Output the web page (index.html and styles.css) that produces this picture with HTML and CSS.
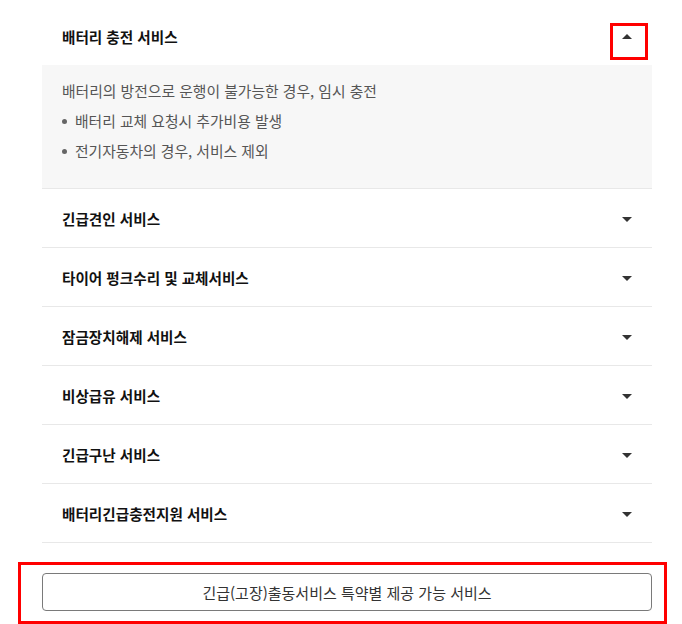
FILE: index.html
```html
<!DOCTYPE html>
<html lang="ko">
<head>
    <meta charset="UTF-8" />
    <meta name="viewport" content="width=device-width, initial-scale=1.0"/>
    <title>긴급출동 서비스</title>
    <link rel="stylesheet" href="styles.css">
</head>
<body>
<div class="page">
    <ul class="acc">
        <li class="acc-item open">
            <button class="acc-head">
                <span>배터리 충전 서비스</span>
                <i class="caret up"></i>
            </button>
            <div class="acc-body">
                <p>배터리의 방전으로 운행이 불가능한 경우, 임시 충전</p>
                <ul class="dots">
                    <li>배터리 교체 요청시 추가비용 발생</li>
                    <li>전기자동차의 경우, 서비스 제외</li>
                </ul>
            </div>
        </li>
        <li class="acc-item">
            <button class="acc-head"><span>긴급견인 서비스</span><i class="caret"></i></button>
        </li>
        <li class="acc-item">
            <button class="acc-head"><span>타이어 펑크수리 및 교체서비스</span><i class="caret"></i></button>
        </li>
        <li class="acc-item">
            <button class="acc-head"><span>잠금장치해제 서비스</span><i class="caret"></i></button>
        </li>
        <li class="acc-item">
            <button class="acc-head"><span>비상급유 서비스</span><i class="caret"></i></button>
        </li>
        <li class="acc-item">
            <button class="acc-head"><span>긴급구난 서비스</span><i class="caret"></i></button>
        </li>
        <li class="acc-item">
            <button class="acc-head"><span>배터리긴급충전지원 서비스</span><i class="caret"></i></button>
        </li>
    </ul>

    <div class="more">
        <button class="more-btn">긴급(고장)출동서비스 특약별 제공 가능 서비스</button>
    </div>
</div>

<!-- 표시 박스 -->
<span class="mark mark-caret"></span>
<span class="mark mark-more"></span>
</body>
</html>
```

FILE: styles.css
```css
* {
    box-sizing: border-box;
}

html, body {
    height: 100%;
}

body {
    position: relative;
    margin: 0;
    overflow: hidden;
    font-family: "Noto Sans CJK KR", "Noto Sans", sans-serif;
    background: #fff;
}

.page {
    width: 610px;
    margin-left: 42px;
    padding-top: 7px;
}

.acc {
    list-style: none;
    margin: 0;
    padding: 0;
}

.acc-item {
    border-bottom: 1px solid #e8e8e8;
}

.acc-head {
    display: flex;
    align-items: center;
    justify-content: space-between;
    width: 100%;
    height: 58px;
    padding: 0 20px;
    border: none;
    background: none;
    font-family: inherit;
    font-size: 14.6px;
    font-weight: 700;
    color: #111;
    text-align: left;
    cursor: pointer;
}

.caret {
    width: 0;
    height: 0;
    border-left: 5px solid transparent;
    border-right: 5px solid transparent;
    border-top: 5px solid #333;
    margin-top: 2px;
}

.caret.up {
    border-top: none;
    border-bottom: 5px solid #333;
    margin-top: 0;
}

.acc-body {
    background: #f7f7f7;
    padding: 11px 20px 22px;
    font-size: 14.8px;
    line-height: 30px;
    color: #555;
}

.acc-body p {
    margin: 0;
}

.dots {
    list-style: none;
    margin: 0;
    padding: 0;
}

.dots li {
    display: flex;
    align-items: center;
}

.dots li::before {
    content: "";
    width: 5px;
    height: 5px;
    border-radius: 50%;
    background: #666;
    margin-right: 8px;
}

.more {
    padding-top: 30px;
}

.more-btn {
    display: block;
    width: 100%;
    height: 38px;
    border: 1px solid #7a7a7a;
    border-radius: 4px;
    background: #fff;
    font-family: inherit;
    font-size: 15px;
    color: #333;
    cursor: pointer;
}

.mark {
    position: absolute;
    border: 3px solid #ff0000;
}

.mark-caret {
    left: 610px;
    top: 23px;
    width: 38px;
    height: 37px;
}

.mark-more {
    left: 18px;
    top: 562px;
    width: 649px;
    height: 62px;
}
```
